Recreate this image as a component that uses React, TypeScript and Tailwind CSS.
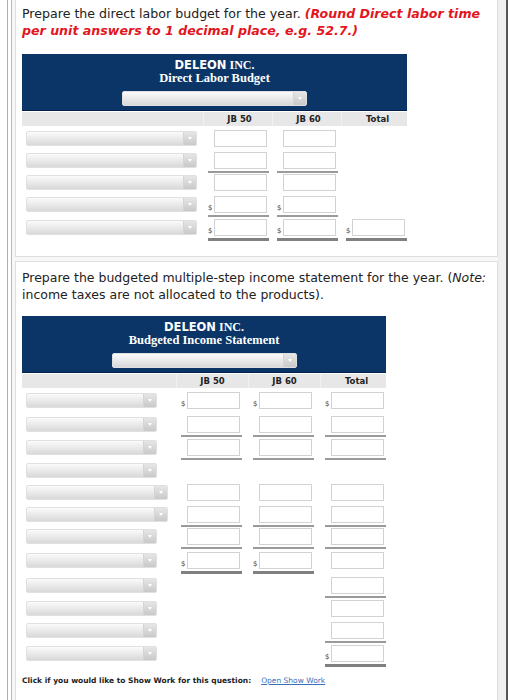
import React from "react";

const sans = { fontFamily: '"DejaVu Sans", Verdana, sans-serif' };

function Arrow() {
  return (
    <div className="flex w-[13px] shrink-0 items-center justify-center border-l border-[#d4d4d4] bg-gradient-to-b from-[#e6e6e6] to-[#c9c9c9]">
      <div className="h-0 w-0 border-l-[2.5px] border-r-[2.5px] border-t-[3px] border-l-transparent border-r-transparent border-t-white" />
    </div>
  );
}

function Sel({ w }: { w: string }) {
  return (
    <div className={`flex h-[15px] ${w} overflow-hidden rounded-[2px] border border-[#e0e0e0] bg-gradient-to-b from-[#fbfbfb] to-[#d9d9d9]`}>
      <div className="flex-1" />
      <Arrow />
    </div>
  );
}

type Line = "none" | "single" | "double";

function Val({ dollar = false, line = "none" }: { dollar?: boolean; line?: Line }) {
  return (
    <div className="flex w-[61px] flex-col">
      <div className="flex items-end">
        <span className="w-[6px] pb-[1px] text-[7px] leading-none text-[#444]" style={sans}>
          {dollar ? "$" : ""}
        </span>
        <div className="h-[17px] w-[53px] border border-[#d2d2d2] bg-white" />
      </div>
      {line === "single" && <div className="mt-[2px] h-[2px] w-[61px] bg-[#9a9a9a]" />}
      {line === "double" && <div className="mt-[2px] h-[3px] w-[61px] bg-[#808080]" />}
    </div>
  );
}

type Cell = null | { dollar?: boolean; line?: Line };

function Header({ title, selW }: { title: string; selW: string }) {
  return (
    <>
      <div className="flex flex-col items-center border-b border-[#012149] bg-[#0a3566] pt-[3px] pb-[4px] text-white">
        <div className="h-[14px] leading-[14px] whitespace-nowrap">
          <span className="text-[11.5px] font-bold" style={sans}>DELEON</span>
          <span className="text-[12px] font-bold" style={{ fontFamily: '"Liberation Serif", serif' }}> INC.</span>
        </div>
        <div
          className="h-[15px] text-[12.5px] font-bold leading-[15px] whitespace-nowrap"
          style={{ fontFamily: '"Liberation Serif", serif' }}
        >
          {title}
        </div>
        <div className="mt-[5px]">
          <Sel w={selW} />
        </div>
      </div>
    </>
  );
}

function ColHead({ grid }: { grid: string }) {
  return (
    <div className={`grid ${grid} h-[14px] mt-[1px] bg-[#e7e7e7] text-[8.5px] font-bold leading-[14px] text-[#222]`} style={sans}>
      <div />
      <div className="border-l border-[#f1f1f1] pl-[5px]"><div className="w-[61px] text-center">JB 50</div></div>
      <div className="border-l border-[#f1f1f1] pl-[5px]"><div className="w-[61px] text-center">JB 60</div></div>
      <div className="border-l border-[#f1f1f1] pl-[5px]"><div className="w-[61px] text-center">Total</div></div>
    </div>
  );
}

function Row({ grid, h, sel, cells }: { grid: string; h: string; sel: string | null; cells: Cell[] }) {
  return (
    <div className={`grid ${grid} ${h} pt-[4px]`}>
      <div className="pl-[4px] pt-[1px]">{sel && <Sel w={sel} />}</div>
      {cells.map((c, i) => (
        <div key={i} className="pl-[5px]">
          {c && <Val dollar={c.dollar} line={c.line} />}
        </div>
      ))}
    </div>
  );
}

export default function App() {
  const g1 = "grid-cols-[181px_69px_69px_66px]";
  const g2 = "grid-cols-[154px_72px_72px_66px]";
  const n = null;
  const e = {};
  const s = { line: "single" as Line };
  const dd = { dollar: true, line: "double" as Line };
  const d = { dollar: true };
  const ds = { dollar: true, line: "single" as Line };

  return (
    <div className="flex h-[700px] w-[508px] overflow-hidden bg-white text-[#222]" style={sans}>
      <div className="ml-[7px] w-[1px] shrink-0 bg-[#b0b0b0]" />
      <div className="ml-[3px] w-[1px] shrink-0 bg-[#b8b8b8]" />
      <div className="flex w-[486px] shrink-0 flex-col bg-[#f7f7f7] pl-[3px]">
        {/* card 1 */}
        <div className="w-[483px] border-x border-b border-[#dedede] bg-white pl-[6px] pt-[5px] pb-[14px]">
          <div className="text-[12.6px] leading-[17px] whitespace-nowrap">
            Prepare the direct labor budget for the year.{" "}
            <span className="font-bold italic text-[#e3151d]">(Round Direct labor time</span>
            <br />
            <span className="font-bold italic text-[#e3151d]">per unit answers to 1 decimal place, e.g. 52.7.)</span>
          </div>
          <div className="mt-[15px] w-[385px]">
            <Header title="Direct Labor Budget" selW="w-[185px]" />
            <ColHead grid={g1} />
            <Row grid={g1} h="h-[22px]" sel="w-[171px]" cells={[e, e, n]} />
            <Row grid={g1} h="h-[22px]" sel="w-[171px]" cells={[s, s, n]} />
            <Row grid={g1} h="h-[22px]" sel="w-[171px]" cells={[e, e, n]} />
            <Row grid={g1} h="h-[23px]" sel="w-[171px]" cells={[ds, ds, n]} />
            <Row grid={g1} h="h-[27px]" sel="w-[171px]" cells={[dd, dd, dd]} />
          </div>
        </div>
        {/* card 2 */}
        <div className="mt-[4px] w-[483px] shrink-0 border border-[#dedede] bg-white pl-[6px] pt-[7px] pb-[40px]">
          <div className="text-[12.5px] leading-[17px] whitespace-nowrap">
            Prepare the budgeted multiple-step income statement for the year. (<span className="italic">Note:</span>
            <br />
            income taxes are not allocated to the products).
          </div>
          <div className="mt-[13px] w-[364px]">
            <Header title="Budgeted Income Statement" selW="w-[185px]" />
            <ColHead grid={g2} />
            <Row grid={g2} h="h-[24px]" sel="w-[131px]" cells={[d, d, d]} />
            <Row grid={g2} h="h-[23px]" sel="w-[131px]" cells={[s, s, s]} />
            <Row grid={g2} h="h-[23px]" sel="w-[131px]" cells={[s, s, s]} />
            <Row grid={g2} h="h-[22px]" sel="w-[131px]" cells={[n, n, n]} />
            <Row grid={g2} h="h-[22px]" sel="w-[142px]" cells={[e, e, e]} />
            <Row grid={g2} h="h-[22px]" sel="w-[142px]" cells={[s, s, s]} />
            <Row grid={g2} h="h-[24px]" sel="w-[131px]" cells={[s, s, s]} />
            <Row grid={g2} h="h-[25px]" sel="w-[131px]" cells={[dd, dd, e]} />
            <Row grid={g2} h="h-[23px]" sel="w-[131px]" cells={[n, n, s]} />
            <Row grid={g2} h="h-[22px]" sel="w-[131px]" cells={[n, n, e]} />
            <Row grid={g2} h="h-[23px]" sel="w-[131px]" cells={[n, n, s]} />
            <Row grid={g2} h="h-[28px]" sel="w-[131px]" cells={[n, n, dd]} />
          </div>
          <div className="mt-[6px] flex items-center text-[7.5px] leading-[12px] whitespace-nowrap">
            <span className="font-bold">Click if you would like to Show Work for this question:</span>
            <span className="ml-[10px] text-[#3b6fb6] underline">Open Show Work</span>
          </div>
        </div>
      </div>
      <div className="w-[8px] shrink-0 bg-[#efefef]" />
      <div className="w-[2px] shrink-0 bg-[#555]" />
    </div>
  );
}
